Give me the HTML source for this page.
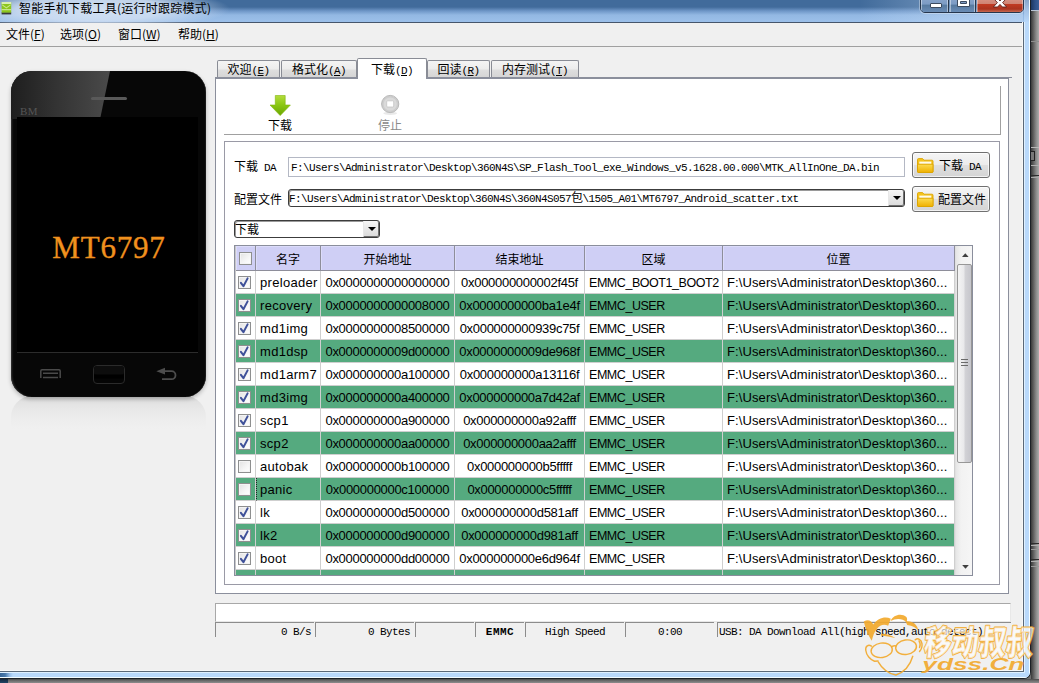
<!DOCTYPE html>
<html lang="zh-CN">
<head>
<meta charset="utf-8">
<title>智能手机下载工具(运行时跟踪模式)</title>
<style>
*{box-sizing:border-box;margin:0;padding:0}
html,body{width:1039px;height:683px;overflow:hidden}
body{position:relative;background:#6e6e6e;font-family:"Liberation Sans","Noto Sans CJK SC",sans-serif;font-size:12px;color:#000}
.abs{position:absolute}
.ui{font-family:"Liberation Sans","Noto Sans CJK SC",sans-serif}
.sim{font-family:"Liberation Mono","Noto Sans CJK SC",monospace;font-size:11px;letter-spacing:-0.6px}
.cjk{font-family:"Noto Sans CJK SC","Liberation Sans",sans-serif}
/* outside shadow strips */
#rshadow{left:1031px;top:0;width:8px;height:683px;background:linear-gradient(90deg,#3a3a3a 0,#585858 25%,#8a8a8a 65%,#acacac 100%)}
#bshadow{left:0;top:679px;width:1039px;height:4px;background:linear-gradient(180deg,#4a4a4a 0,#666 35%,#7c7c7c 70%,#8c8c8c 100%)}
/* window */
#win{left:0;top:0;width:1031px;height:679px;background:#f0f0f0;border-right:1px solid #1c2026;border-bottom:1px solid #1c2026;border-radius:0 0 7px 0;overflow:hidden}
#frameR{left:1022px;top:22px;width:8px;height:656px;background:linear-gradient(90deg,#f8f8f8 0,#f8f8f8 1px,#5a6878 1px,#5a6878 2px,#dff0ff 2px,#dff0ff 3px,#b9d9fb 3px,#b9d9fb 7px,#f4fcff 7px,#f4fcff 8px)}
#frameB{left:0;top:670px;width:1030px;height:8px;background:linear-gradient(180deg,#f8f8f8 0,#f8f8f8 1px,#5a6878 1px,#5a6878 2px,#dff0ff 2px,#dff0ff 3px,#b9d9fb 3px,#b9d9fb 7px,#f4fcff 7px,#f4fcff 8px);clip-path:polygon(0 0,1023px 0,1023px 1px,1024px 1px,1024px 2px,1025px 2px,1025px 3px,1030px 3px,1030px 8px,0 8px)}
#title{left:0;top:0;width:1030px;height:23px;background:linear-gradient(180deg,#416b9b 0,#416b9b 7px,#6f97c8 11px,#93b8e3 15px,#9cc0ea 22px,#46566c 22px,#46566c 23px)}
#glow{left:-45px;top:-12px;width:275px;height:42px;background:radial-gradient(closest-side,rgba(215,228,245,.95) 0,rgba(205,221,242,.9) 55%,rgba(190,210,238,0) 100%)}
#ttext{left:19px;top:0;height:16px;line-height:15px;font-size:12px;white-space:nowrap;letter-spacing:.25px}
#menubar{left:0;top:23px;width:1023px;height:24px;background:#f0f0f0;border-bottom:1px solid #a0a0a0}
.menu{top:26px;height:16px;line-height:16px;font-size:12px;white-space:nowrap}

/* phone */
#phone{left:11px;top:71px;width:195px;height:326px;border-radius:21px;background:#070707;overflow:hidden;box-shadow:0 2px 4px rgba(0,0,0,.25),inset 2px 0 2px -1px #3a3a3a,inset -1px 0 1px -0.5px #2a2a2a}
#gloss{left:0;top:0;width:99px;height:48px;background:linear-gradient(90deg,#1e1e1e 0,#333 45%,#4a4a4a 100%);clip-path:polygon(0 0,100% 0,90% 100%,0 100%)}
#screen{left:6px;top:46px;width:181px;height:236px;background:#000;border-bottom:1px solid #2c2c2c}
#spk{left:80px;top:26px;width:36px;height:3px;border-radius:2px;background:#595959}
#bm{left:9px;top:34px;font-family:"Liberation Serif",serif;font-size:11px;line-height:12px;color:#555;letter-spacing:.3px}
#mt{left:0;top:159px;width:195px;text-align:center;font-family:"Liberation Serif",serif;font-size:31px;line-height:36px;color:#f0911e;letter-spacing:.8px;padding-left:1px;-webkit-text-stroke:.35px #f0911e}
#refl{left:11px;top:396px;width:195px;height:33px;border-radius:21px 21px 0 0;background:linear-gradient(180deg,#d4d4d4 0,#e2e2e2 18%,#e9e9e9 45%,#eeeeee 80%,#f0f0f0 100%)}

/* tabs */
.tab{top:60px;height:18px;border:1px solid #898c95;border-bottom:none;border-radius:2px 2px 0 0;background:linear-gradient(180deg,#f4f4f4 0,#ececec 48%,#dedede 52%,#d4d4d4 100%);text-align:center;font-size:12px;line-height:16px;white-space:nowrap}
.tab.sel{top:58px;height:19px;background:#fff;z-index:3;line-height:19px}
.tab.sel:after{content:"";position:absolute;left:0;right:0;top:18px;height:3px;background:#fff}
.tl{font-family:"Liberation Mono",monospace;font-size:11px;letter-spacing:-0.6px}
#pane{left:215px;top:77px;width:794px;height:517px;background:#fff;border:1px solid #8b8f9c;border-top:2px solid #8b8f9c}
#paneline{left:215px;top:77px;width:797px;height:1px;background:#8b8f9c}
#tb{left:224px;top:86px;width:777px;height:49px;border-right:1px solid #a0a0a0;border-bottom:1px solid #a0a0a0}
#fr2{left:224px;top:141px;width:776px;height:444px;border:1px solid #9a9aa6}
.lbl{font-size:12px;line-height:14px;white-space:nowrap}

.sl{font-family:"Noto Sans CJK SC","Liberation Sans",sans-serif;font-weight:400;font-size:12px;line-height:14px;white-space:nowrap}
.mono{font-family:"Liberation Mono",monospace;font-size:11px;letter-spacing:-0.6px}
.inp{background:#fff;border:1px solid #b4b8c4;height:20px;line-height:20px;white-space:nowrap;overflow:hidden;padding-left:2px}
.combo{background:#fff;border:1px solid #3c3c3c;border-radius:3px;height:18px;line-height:17px;white-space:nowrap;overflow:hidden;padding-left:0;box-shadow:inset 1px 1px 0 #9a9a9a}
.drop{width:16px;height:16px;background:linear-gradient(180deg,#f6f6f6,#dcdcdc);border-left:1px solid #e8e8e8;border-right:1px solid #707070;border-bottom:1px solid #707070;border-radius:0 2px 2px 0}
.drop:after{content:"";position:absolute;left:4px;top:6px;border:4px solid transparent;border-top:4px solid #000;border-bottom:none}
.btn{width:78px;height:26px;border:1px solid #707070;border-radius:3px;background:linear-gradient(180deg,#f5f5f5 0,#ececec 48%,#dfdfdf 52%,#d4d4d4 100%);box-shadow:inset 0 0 0 1px rgba(255,255,255,.7)}

/* table */
#tbl{left:234px;top:245px;width:739px;height:331px;border:1px solid #8a8e9c;background:#fff;overflow:hidden;box-shadow:inset 1px 0 0 #c8c8c8}
.th{top:0;height:25px;background:#cfcff5;border-right:1px solid #8e8e9a;border-bottom:1px solid #8e8e9a;text-align:center;line-height:26px;font-size:12px;font-family:"Noto Sans CJK SC","Liberation Sans",sans-serif;box-shadow:inset 1px 1px 0 #dcdcfa}
.tr{left:1px;width:719px;height:23px}
.tr.g{background:#55aa7f}
.td{top:0;height:23px;line-height:24px;font-size:13px;white-space:nowrap;overflow:hidden;border-right:1px solid #cfcfcf;border-bottom:1px solid #cfcfcf}
.c0{left:0;width:20px}.c1{left:20px;width:65px;padding-left:4px;letter-spacing:.3px}.c2{left:85px;width:134px;text-align:center;letter-spacing:-.3px}.c3{left:219px;width:130px;text-align:center;letter-spacing:-.3px}.c4{left:349px;width:138px;padding-left:4px;font-size:12.5px;letter-spacing:-.45px}.c5{left:487px;width:232px;padding-left:4px;letter-spacing:.1px}
.cb{left:2px;top:5px;width:13px;height:13px;border:1px solid #8e8f8f;background:linear-gradient(135deg,#e2e2e2 0,#f6f6f6 60%,#fff 100%);box-shadow:inset 0 0 0 1px #f4f4f4}
.cb svg{position:absolute;left:-1px;top:-1px}
#sb{left:720px;top:0;width:18px;height:329px;background:linear-gradient(90deg,#e6e6e6 0,#f2f2f2 30%,#f6f6f6 100%);border-left:1px solid #e0e0e0}
#thumb{left:1px;top:18px;width:15px;height:199px;border:1px solid #979797;border-radius:2px;background:linear-gradient(90deg,#f4f4f4 0,#e9e9eb 45%,#d2d2d6 55%,#c6c6cc 100%)}

#prog{left:215px;top:603px;width:796px;height:19px;background:#fff;border:1px solid #a8a8a8;border-right-color:#e8e8e8;border-bottom-color:#e8e8e8}
.st{top:622px;height:15px;border-left:1px solid #8c8c8c;border-top:1px solid #8c8c8c;line-height:18px;white-space:nowrap;overflow:hidden}

/* caption buttons */
#cap{left:920px;top:-4px;width:104px;height:17px;border:1px solid #26364d;border-radius:0 0 5px 5px;overflow:hidden;box-shadow:0 0 0 1px rgba(255,255,255,.35)}
#cap div{position:absolute;top:0;height:16px}
#cmin{left:0;width:28px;background:linear-gradient(180deg,#8aa6cb 0,#7c9bc4 45%,#56799f 50%,#6d8fb9 100%);border-right:1px solid #26364d;box-shadow:inset 0 0 0 1px rgba(255,255,255,.45)}
#cmax{left:29px;width:26px;background:linear-gradient(180deg,#8aa6cb 0,#7c9bc4 45%,#56799f 50%,#6d8fb9 100%);border-right:1px solid #26364d;box-shadow:inset 0 0 0 1px rgba(255,255,255,.45)}
#ccls{left:56px;width:46px;background:linear-gradient(180deg,#d9978a 0,#d08473 42%,#c03a22 46%,#aa341f 75%,#cf7a62 100%);box-shadow:inset 0 0 0 1px rgba(255,255,255,.35)}
.tab.sl{line-height:16px}.tab.sel.sl{line-height:19px}

#rtop{left:1031px;top:0;width:8px;height:10px;background:linear-gradient(90deg,#1c3660 0,#2d4f86 50%,#3c6098 100%);border-bottom:1px solid #b9c4d4;height:11px}
#tlight{left:860px;top:0;width:163px;height:22px;background:linear-gradient(90deg,rgba(205,226,250,0) 0,rgba(205,226,250,.3) 50%,rgba(205,226,250,.45) 100%)}
#tframeR{left:1024px;top:0;width:6px;height:23px;background:linear-gradient(180deg,#87a5ca 0,#a4c2e6 45%,#b9d9fb 100%);border-right:1px solid #f4fcff}

.rl{left:1031px;width:8px;height:1px}

#fbl{left:0;top:673px;width:13px;height:4px;background:linear-gradient(90deg,#386698 0,#4878aa 40%,rgba(120,165,215,.5) 75%,rgba(185,217,251,0) 100%)}
#bl{left:0;top:679px;width:8px;height:4px;background:linear-gradient(180deg,#14263c,#1f4566)}
</style>
</head>
<body>
<div id="rshadow" class="abs"></div>
<div id="bshadow" class="abs"></div>
<div id="rtop" class="abs"></div>
<div id="bl" class="abs"></div>
<div class="abs rl" style="top:41px;background:#8e8e8e"></div><div class="abs rl" style="top:147px;background:#b8b8b8"></div><div class="abs rl" style="top:165px;background:#b0b0b0"></div><div class="abs rl" style="top:175px;background:#2e2e2e"></div><div class="abs rl" style="top:177px;background:#a8a8a8"></div><div class="abs rl" style="top:543px;background:#2e2e2e"></div><div class="abs rl" style="top:545px;background:#b0b0b0"></div><div class="abs rl" style="top:549px;background:#9a9a9a"></div><div class="abs rl" style="top:559px;background:#2e2e2e"></div><div class="abs rl" style="top:561px;background:#b0b0b0"></div><div class="abs rl" style="top:566px;background:#999"></div><div class="abs" style="left:1031px;top:151px;width:4px;height:10px;border:1px solid #222;border-left:none;background:#777"></div>
<div id="win" class="abs">
  <div id="title" class="abs"></div>
  <div id="tlight" class="abs"></div>
  <div id="tframeR" class="abs"></div>
  <div id="glow" class="abs"></div>
  <div id="ttext" class="abs cjk">智能手机下载工具(运行时跟踪模式)</div>
  <svg class="abs" style="left:1px;top:1px" width="11" height="14" viewBox="0 0 11 14">
    <rect x=".6" y="11.2" width="9.6" height="2.2" fill="#3a3a3a"/>
    <rect x=".6" y="1" width="9.6" height="10.6" fill="#8cc61c"/>
    <rect x=".6" y="1" width="9.6" height="2" fill="#d8efb0"/>
    <path d="M1.2 3.2 L5.4 6.2 L9.6 3.2 V4.6 L5.4 7.6 L1.2 4.6 Z" fill="#c9e88c"/>
    <rect x=".6" y="8.2" width="9.6" height="1" fill="#d4eda4"/>
  </svg>
  <div id="menubar" class="abs"></div>
  <div class="abs menu cjk" style="left:6px">文件(<u>F</u>)</div>
  <div class="abs menu cjk" style="left:60px">选项(<u>O</u>)</div>
  <div class="abs menu cjk" style="left:118px">窗口(<u>W</u>)</div>
  <div class="abs menu cjk" style="left:178px">帮助(<u>H</u>)</div>
  <div id="frameR" class="abs"></div>
  <div id="frameB" class="abs"></div>
  <div id="fbl" class="abs"></div>
  <div id="cap" class="abs"><div id="cmin"></div><div id="cmax"></div><div id="ccls"></div></div>
  <svg class="abs" style="left:920px;top:0" width="104" height="13" viewBox="0 0 104 13">
    <rect x="10.5" y="3.5" width="11" height="4" rx=".5" fill="#fff" stroke="#3c4a5e" stroke-width="1"/>
    <path d="M37.5 -2 H49.5 V6.5 H37.5 Z M40.5 1.5 H46.5 V3.5 H40.5 Z" fill="#fff" fill-rule="evenodd" stroke="#3c4a5e" stroke-width="1"/>
    <path d="M74 -3 L76.8 -3 L80 1 L83.2 -3 L86 -3 L86 -1 L82.6 2.6 L86.6 7 L82.4 7 L80 4.4 L77.6 7 L73.4 7 L77.4 2.6 L74 -1 Z" fill="#fff" stroke="#5a2018" stroke-width=".9"/>
  </svg>
  <div id="refl" class="abs"></div>
  <div id="phone" class="abs">
    <div id="gloss" class="abs"></div>
    <div id="spk" class="abs"></div>
    <div id="bm" class="abs">BM</div>
    <div id="screen" class="abs"></div>
    <div id="mt" class="abs">MT6797</div>
    <svg class="abs" style="left:0;top:289px" width="195" height="30" viewBox="0 0 195 30">
      <path d="M29.8 18 V11 Q29.8 9.8 31 9.8 H48 Q49.2 9.8 49.2 11 V18" fill="none" stroke="#4a4a4a" stroke-width="1.5"/>
      <path d="M32 13.2 H47 M32 17.6 H47" fill="none" stroke="#4a4a4a" stroke-width="1.5"/>
      <rect x="82.5" y="5.5" width="31" height="18" rx="3.5" fill="#050505" stroke="#2b2b2b" stroke-width="1"/>
      <rect x="83" y="6" width="30" height="9" rx="3" fill="#0d0d0d"/>
      <rect x="83" y="14.5" width="30" height="4" fill="#000"/>
      <path d="M151 19.2 H160.5 A4 4 0 0 0 160.5 11.2 H152" fill="none" stroke="#4d4d4d" stroke-width="1.8"/>
      <path d="M145.3 11.2 L154 7.8 V14.4 Z" fill="#4d4d4d"/>
    </svg>
  </div>
  <div class="abs tab sl" style="left:217px;width:63px">欢迎<span class="tl">(<u>E</u>)</span></div>
  <div class="abs tab sl" style="left:281px;width:76px">格式化<span class="tl">(<u>A</u>)</span></div>
  <div class="abs tab sl" style="left:427px;width:63px">回读<span class="tl">(<u>R</u>)</span></div>
  <div class="abs tab sl" style="left:491px;width:88px">内存测试<span class="tl">(<u>T</u>)</span></div>
  <div id="paneline" class="abs"></div>
  <div id="pane" class="abs"></div>
  <div class="abs tab sel sl" style="left:357px;width:70px">下载<span class="tl">(<u>D</u>)</span></div>
  <div id="tb" class="abs"></div>
  <div id="fr2" class="abs"></div>
  <svg class="abs" style="left:268px;top:94px" width="24" height="24" viewBox="0 0 24 24">
    <defs><linearGradient id="gar" x1="0" y1="0" x2="0" y2="1"><stop offset="0" stop-color="#b4dc3c"/><stop offset=".45" stop-color="#8cc814"/><stop offset="1" stop-color="#6aa600"/></linearGradient></defs>
    <path d="M7.3 1.5 H17.2 V11 H22.4 L12.2 21.6 L2 11 H7.3 Z" fill="url(#gar)" stroke="#7fb50c" stroke-width=".6"/>
  </svg>
  <div class="abs sl" style="left:268px;top:118px;font-weight:400">下载</div>
  <svg class="abs" style="left:380px;top:93px" width="22" height="24" viewBox="0 0 22 24">
    <ellipse cx="10.2" cy="20.3" rx="7" ry="1.6" fill="#e9e9e9"/>
    <circle cx="10.2" cy="11" r="8.6" fill="#cdcdcd" stroke="#b9b9b9" stroke-width="1"/>
    <circle cx="10.2" cy="11" r="6.6" fill="#dadada"/>
    <rect x="6.7" y="7.8" width="7" height="6.2" rx="1" fill="#fff" stroke="#c4c4c4" stroke-width=".8"/>
  </svg>
  <div class="abs sl" style="left:378px;top:118px;color:#8a8a8a">停止</div>
  <div class="abs sl" style="left:234px;top:159px">下载<span class="mono" style="margin-left:6px">DA</span></div>
  <div class="abs inp mono" style="left:288px;top:157px;width:617px">F:\Users\Administrator\Desktop\360N4S\SP_Flash_Tool_exe_Windows_v5.1628.00.000\MTK_AllInOne_DA.bin</div>
  <div class="abs sl" style="left:234px;top:192px">配置文件</div>
  <div class="abs combo mono" style="left:288px;top:189px;width:617px">F:\Users\Administrator\Desktop\360N4S\360N4S057<span class="sl">包</span>\1505_A01\MT6797_Android_scatter.txt</div>
  <div class="abs drop" style="left:888px;top:190px"></div>
  <div class="abs combo sl" style="left:234px;top:220px;width:146px;line-height:15px">下载</div>
  <div class="abs drop" style="left:363px;top:221px"></div>
  <div class="abs btn" style="left:912px;top:152px"></div>
  <div class="abs btn" style="left:912px;top:186px"></div>
  <svg class="abs" style="left:916px;top:157px" width="19" height="17" viewBox="0 0 19 17"><use href="#fold"/></svg>
  <svg class="abs" style="left:916px;top:191px" width="19" height="17" viewBox="0 0 19 17"><use href="#fold"/></svg>
  <div class="abs sl" style="left:939px;top:158px">下载<span class="mono" style="margin-left:6px">DA</span></div>
  <div class="abs sl" style="left:938px;top:192px">配置文件</div>
  <svg width="0" height="0" style="position:absolute"><defs>
    <linearGradient id="fg" x1="0" y1="0" x2="0" y2="1"><stop offset="0" stop-color="#fcdc50"/><stop offset="1" stop-color="#efb000"/></linearGradient>
    <path id="chk" d="M2.9 6.9 L5.4 10.2 L9.6 2.4" fill="none" stroke="#3f5199" stroke-width="2" stroke-linecap="round" stroke-linejoin="round"/>
    <g id="fold"><path d="M1.5 2.6 Q1.5 1.6 2.5 1.6 H6.6 L8 3.2 H16 Q17 3.2 17 4.2 V14.5 Q17 15.5 16 15.5 H2.5 Q1.5 15.5 1.5 14.5 Z" fill="#f6c51c" stroke="#dba400" stroke-width=".9"/>
    <rect x="3.3" y="4.6" width="12" height="2.6" fill="#fffbe8"/>
    <path d="M1.5 7.2 H17 V14.5 Q17 15.5 16 15.5 H2.5 Q1.5 15.5 1.5 14.5 Z" fill="url(#fg)" stroke="#dba400" stroke-width=".9"/></g>
  </defs></svg>
  <div id="tbl" class="abs">
  <div class="abs th" style="left:1px;width:20px"><div class="abs cb" style="left:3px;top:6px"></div></div>
  <div class="abs th" style="left:21px;width:65px">名字</div>
  <div class="abs th" style="left:86px;width:134px">开始地址</div>
  <div class="abs th" style="left:220px;width:130px">结束地址</div>
  <div class="abs th" style="left:350px;width:138px">区域</div>
  <div class="abs th" style="left:488px;width:232px">位置</div>
  <div class="abs tr" style="top:25px"><div class="abs td c0"><div class="abs cb on"><svg width="13" height="13" viewBox="0 0 13 13"><use href="#chk"/></svg></div></div><div class="abs td c1">preloader</div><div class="abs td c2">0x0000000000000000</div><div class="abs td c3">0x000000000002f45f</div><div class="abs td c4">EMMC_BOOT1_BOOT2</div><div class="abs td c5">F:\Users\Administrator\Desktop\360...</div></div>
  <div class="abs tr g" style="top:48px"><div class="abs td c0"><div class="abs cb on"><svg width="13" height="13" viewBox="0 0 13 13"><use href="#chk"/></svg></div></div><div class="abs td c1">recovery</div><div class="abs td c2">0x0000000000008000</div><div class="abs td c3">0x0000000000ba1e4f</div><div class="abs td c4">EMMC_USER</div><div class="abs td c5">F:\Users\Administrator\Desktop\360...</div></div>
  <div class="abs tr" style="top:71px"><div class="abs td c0"><div class="abs cb on"><svg width="13" height="13" viewBox="0 0 13 13"><use href="#chk"/></svg></div></div><div class="abs td c1">md1img</div><div class="abs td c2">0x0000000008500000</div><div class="abs td c3">0x000000000939c75f</div><div class="abs td c4">EMMC_USER</div><div class="abs td c5">F:\Users\Administrator\Desktop\360...</div></div>
  <div class="abs tr g" style="top:94px"><div class="abs td c0"><div class="abs cb on"><svg width="13" height="13" viewBox="0 0 13 13"><use href="#chk"/></svg></div></div><div class="abs td c1">md1dsp</div><div class="abs td c2">0x0000000009d00000</div><div class="abs td c3">0x0000000009de968f</div><div class="abs td c4">EMMC_USER</div><div class="abs td c5">F:\Users\Administrator\Desktop\360...</div></div>
  <div class="abs tr" style="top:117px"><div class="abs td c0"><div class="abs cb on"><svg width="13" height="13" viewBox="0 0 13 13"><use href="#chk"/></svg></div></div><div class="abs td c1">md1arm7</div><div class="abs td c2">0x000000000a100000</div><div class="abs td c3">0x000000000a13116f</div><div class="abs td c4">EMMC_USER</div><div class="abs td c5">F:\Users\Administrator\Desktop\360...</div></div>
  <div class="abs tr g" style="top:140px"><div class="abs td c0"><div class="abs cb on"><svg width="13" height="13" viewBox="0 0 13 13"><use href="#chk"/></svg></div></div><div class="abs td c1">md3img</div><div class="abs td c2">0x000000000a400000</div><div class="abs td c3">0x000000000a7d42af</div><div class="abs td c4">EMMC_USER</div><div class="abs td c5">F:\Users\Administrator\Desktop\360...</div></div>
  <div class="abs tr" style="top:163px"><div class="abs td c0"><div class="abs cb on"><svg width="13" height="13" viewBox="0 0 13 13"><use href="#chk"/></svg></div></div><div class="abs td c1">scp1</div><div class="abs td c2">0x000000000a900000</div><div class="abs td c3">0x000000000a92afff</div><div class="abs td c4">EMMC_USER</div><div class="abs td c5">F:\Users\Administrator\Desktop\360...</div></div>
  <div class="abs tr g" style="top:186px"><div class="abs td c0"><div class="abs cb on"><svg width="13" height="13" viewBox="0 0 13 13"><use href="#chk"/></svg></div></div><div class="abs td c1">scp2</div><div class="abs td c2">0x000000000aa00000</div><div class="abs td c3">0x000000000aa2afff</div><div class="abs td c4">EMMC_USER</div><div class="abs td c5">F:\Users\Administrator\Desktop\360...</div></div>
  <div class="abs tr" style="top:209px"><div class="abs td c0"><div class="abs cb"></div></div><div class="abs td c1">autobak</div><div class="abs td c2">0x000000000b100000</div><div class="abs td c3">0x000000000b5fffff</div><div class="abs td c4">EMMC_USER</div><div class="abs td c5">F:\Users\Administrator\Desktop\360...</div></div>
  <div class="abs tr g" style="top:232px"><div class="abs td c0"><div class="abs cb"></div></div><div class="abs td c1" style="border-left:1px dotted #222;padding-left:3px">panic</div><div class="abs td c2">0x000000000c100000</div><div class="abs td c3">0x000000000c5fffff</div><div class="abs td c4">EMMC_USER</div><div class="abs td c5">F:\Users\Administrator\Desktop\360...</div></div>
  <div class="abs tr" style="top:255px"><div class="abs td c0"><div class="abs cb on"><svg width="13" height="13" viewBox="0 0 13 13"><use href="#chk"/></svg></div></div><div class="abs td c1">lk</div><div class="abs td c2">0x000000000d500000</div><div class="abs td c3">0x000000000d581aff</div><div class="abs td c4">EMMC_USER</div><div class="abs td c5">F:\Users\Administrator\Desktop\360...</div></div>
  <div class="abs tr g" style="top:278px"><div class="abs td c0"><div class="abs cb on"><svg width="13" height="13" viewBox="0 0 13 13"><use href="#chk"/></svg></div></div><div class="abs td c1">lk2</div><div class="abs td c2">0x000000000d900000</div><div class="abs td c3">0x000000000d981aff</div><div class="abs td c4">EMMC_USER</div><div class="abs td c5">F:\Users\Administrator\Desktop\360...</div></div>
  <div class="abs tr" style="top:301px"><div class="abs td c0"><div class="abs cb on"><svg width="13" height="13" viewBox="0 0 13 13"><use href="#chk"/></svg></div></div><div class="abs td c1">boot</div><div class="abs td c2">0x000000000dd00000</div><div class="abs td c3">0x000000000e6d964f</div><div class="abs td c4">EMMC_USER</div><div class="abs td c5">F:\Users\Administrator\Desktop\360...</div></div>
  <div class="abs tr g" style="top:324px"><div class="abs td c0"></div><div class="abs td c1"></div><div class="abs td c2"></div><div class="abs td c3"></div><div class="abs td c4"></div><div class="abs td c5"></div></div>
  <div id="sb" class="abs"><div id="thumb" class="abs"></div>
<svg class="abs" style="left:0;top:0" width="18" height="328" viewBox="0 0 18 328">
<path d="M6 11 L9.3 7.2 L12.6 11 Z" fill="#404040"/>
<path d="M6.2 319 L12.8 319 L9.5 322.8 Z" fill="#404040"/>
<g stroke="#6a6a6a" stroke-width="1"><line x1="5" y1="113.5" x2="12" y2="113.5"/><line x1="5" y1="116.5" x2="12" y2="116.5"/><line x1="5" y1="119.5" x2="12" y2="119.5"/></g>
</svg></div>
  </div>
  <div id="prog" class="abs"></div>
  <div class="abs st mono" style="left:215px;width:99px;text-align:right;padding-right:3px">0 B/s</div>
  <div class="abs st mono" style="left:315px;width:99px;text-align:right;padding-right:4px">0 Bytes</div>
  <div class="abs st mono" style="left:415px;width:59px"></div>
  <div class="abs st mono" style="left:475px;width:49px;text-align:center;font-weight:bold;letter-spacing:.5px">EMMC</div>
  <div class="abs st mono" style="left:525px;width:99px;text-align:center">High Speed</div>
  <div class="abs st mono" style="left:625px;width:89px;text-align:center">0:00</div>
  <div class="abs st mono" style="left:717px;width:294px;padding-left:1px">USB: DA Download All(high speed,auto detect)</div>
</div>
<svg class="abs" style="left:858px;top:608px;z-index:20" width="181" height="75" viewBox="0 0 1647 683">
  <g fill="#f2a92c" fill-opacity=".92" stroke="none">
    <path d="M125 298 C95 250 70 200 52 122 C95 100 122 118 138 150 C180 90 250 70 298 98 C290 120 282 142 274 162 C240 142 200 152 172 188 C148 218 134 255 125 298 Z"/>
    <path d="M296 118 C320 62 395 45 440 82 C450 98 448 116 440 130 C405 92 345 92 296 118 Z"/>
    <path d="M432 124 C490 112 540 148 550 208 C528 178 498 160 448 154 Z"/>
    <path d="M208 236 C250 232 302 248 338 274 C296 262 250 254 208 250 Z"/>
  </g>
  <g fill="none" stroke="#f2a92c" stroke-opacity=".92" stroke-width="13" stroke-linecap="round" stroke-linejoin="round">
    <ellipse cx="215" cy="385" rx="97" ry="66" transform="rotate(-8 215 385)"/>
    <ellipse cx="437" cy="357" rx="95" ry="66" transform="rotate(-8 437 357)"/>
    <path d="M308 352 Q326 340 345 346"/>
    <path d="M122 348 C95 330 65 345 70 385 C75 430 110 470 150 485 L182 482"/>
    <path d="M185 492 C215 545 270 595 345 610 C420 585 475 520 498 440"/>
    <path d="M520 290 C545 270 575 285 582 325 C585 355 575 380 560 395"/>
    <path d="M555 300 C565 315 568 340 560 360"/>
  </g>
  <g font-family="'Noto Sans CJK SC','Liberation Sans',sans-serif" font-weight="900" font-size="315" fill="#fff" fill-opacity=".68" stroke="#f2a92c" stroke-opacity=".9" stroke-width="17" stroke-linejoin="round" paint-order="stroke">
    <text x="640" y="432" textLength="990" lengthAdjust="spacingAndGlyphs" transform="skewX(-6)" style="paint-order:stroke">移动叔叔</text>
  </g>
  <text x="585" y="562" font-family="'Liberation Sans',sans-serif" font-weight="bold" font-style="italic" font-size="150" fill="#f2a92c" fill-opacity=".92" textLength="930" lengthAdjust="spacingAndGlyphs">ydss.Cn</text>
</svg>
</body>
</html>
